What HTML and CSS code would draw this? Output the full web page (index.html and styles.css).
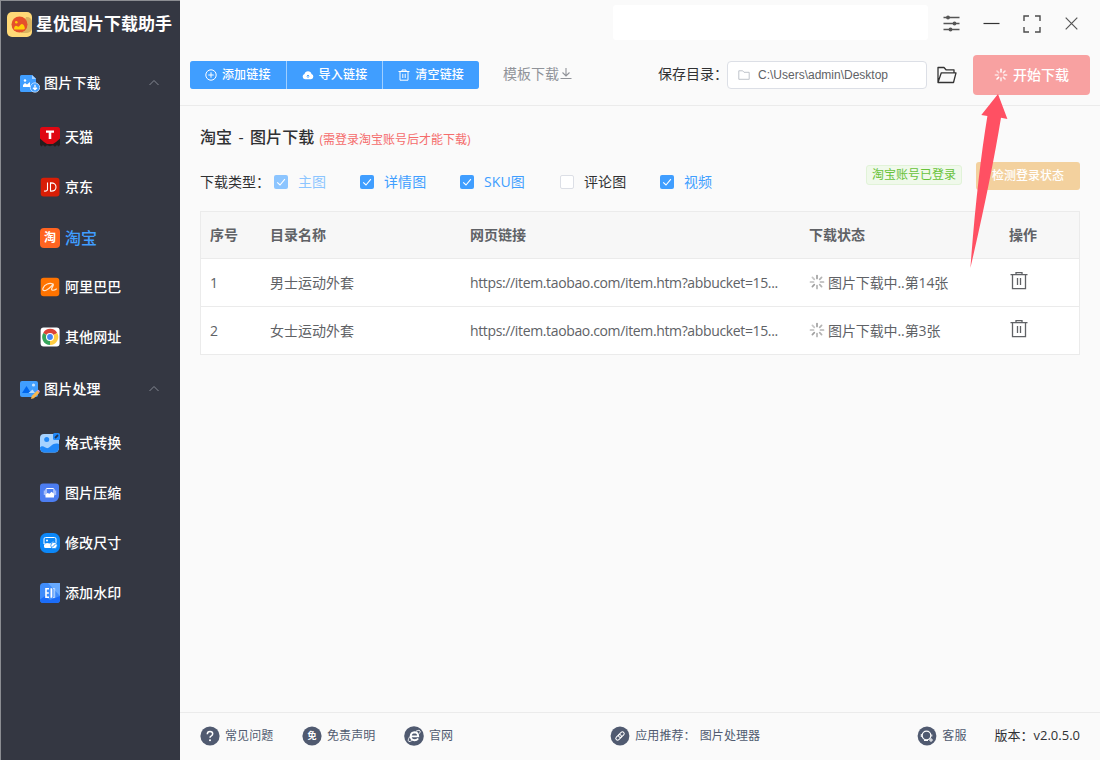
FILE: index.html
```html
<!DOCTYPE html>
<html lang="zh-CN">
<head>
<meta charset="utf-8">
<title>星优图片下载助手</title>
<link rel="stylesheet" href="styles.css">
</head>
<body>
<svg class="defs" width="0" height="0" aria-hidden="true">
  <symbol id="chevron" viewBox="0 0 12 12"><path d="M1.5 8 6 3.500 10.500 8" fill="none" stroke="currentColor"/></symbol>
  <symbol id="check" viewBox="0 0 14 14"><path d="M3.200 7.300 6 10 10.900 4.200" fill="none" stroke="#fff" stroke-width="1.100"/></symbol>
  <symbol id="spinner" viewBox="0 0 16 16"><g fill="none" stroke="currentColor" stroke-width="1.700" stroke-linecap="round"><path d="M8 1.500v3"/><path d="M12.600 3.400 10.700 5.300" opacity=".8"/><path d="M14.500 8h-3" opacity=".8"/><path d="M12.600 12.600l-1.900-1.900" opacity=".8"/><path d="M8 14.500v-3" opacity=".8"/><path d="M3.400 12.600l1.900-1.900"/><path d="M1.500 8h3" opacity=".7"/><path d="M3.400 3.400l1.900 1.900" opacity=".6"/></g></symbol>
  <symbol id="trash" viewBox="0 0 18 20"><path d="M.5 3.700h17M6 3.500V1.700h6v1.800M2.500 4v13.600h13V4M7.500 7v7M10.500 7v7" fill="none" stroke="currentColor" stroke-width="1.300"/></symbol>
</svg>
<div class="app">
  <aside class="sidebar">
    <div class="brand">
      <svg width="25" height="25" viewBox="0 0 25 25"><rect width="25" height="25" rx="5" fill="#ffd977"/><path d="M19 5h1a5 5 0 0 1 5 5v6a5 5 0 0 1-5 5h-6z" fill="#d9b35f"/><circle cx="12.500" cy="12.500" r="8" fill="#e5502b"/><path d="M7 17.200c.1-2 .8-3.500 2-3.500s1.400 1 2.400 1c1.300 0 1.900-2.600 3.500-2.600 1.800 0 2.800 2.600 3 4.600-.4.600-.9.700-1.400.7H8z" fill="#ffcf05"/><circle cx="9.300" cy="10.300" r="1.300" fill="#ffcf05"/></svg>
      <span>星优图片下载助手</span>
    </div>
    <div class="group">
      <svg width="20" height="18" viewBox="0 0 20 18"><path d="M1.500 0H12l4 3.500V17H1.500A1.500 1.500 0 0 1 0 15.500v-14A1.500 1.500 0 0 1 1.500 0z" fill="#409eff"/><path d="M12 0l4 4h-4z" fill="#a9d2ff"/><circle cx="5" cy="5.500" r="1.200" fill="#fff"/><path d="M3 12V10l2-2 2 1.500L10 7v5z" fill="#fff"/><circle cx="15" cy="12.500" r="4.700" fill="#409eff" stroke="#d7eaff" stroke-width=".8"/><path d="M15 9.800v4.500M13 12.700l2 2 2-2" fill="none" stroke="#fff" stroke-width="1.300"/></svg>
      <span>图片下载</span><svg class="caret" width="12" height="12"><use href="#chevron"/></svg>
    </div>
    <a class="item"><svg width="20" height="20" viewBox="0 0 20 20"><rect width="20" height="17" rx="2.500" fill="#df0712"/><path d="M0 11.500 4 15l3 2h6l3-2 4-3.500V18l-1.500 1.500L17 18l-2 1.800-2-1.500-3 1-3-1-2 1.500L3 18l-1.500 1.500L0 18z" fill="#241d1e"/><path d="M6 3.500h8v2.200h-2.700V12H8.700V5.700H6z" fill="#fff"/></svg><span>天猫</span></a>
    <a class="item"><svg width="20" height="20" viewBox="0 0 20 20"><rect x=".7" y=".7" width="18.800" height="18.800" rx="3" fill="#d81e06"/><path d="M7.500 5.500v6.700q0 2.300-3.500 1.800M10.500 5.900v8.200q5.500.4 5.500-4t-5.500-4.200z" fill="none" stroke="#fff" stroke-width="1.100"/></svg><span>京东</span></a>
    <a class="item active"><svg width="20" height="20" viewBox="0 0 20 20"><rect width="20" height="20" rx="4" fill="#ff6421"/><text class="logo-tao" x="10" y="14.300" text-anchor="middle">淘</text></svg><span>淘宝</span></a>
    <a class="item"><svg width="20" height="20" viewBox="0 0 20 20"><rect x=".7" y=".7" width="18.600" height="18.600" rx="3" fill="#ff7300"/><path d="M13.300 7.300C9.500 4.900 4.500 7.700 3 11.200c-.9 2.700 1.600 2.900 3.600 1.800 3-1.500 5.200-4.300 6.700-5.700.9.800-1.500 3-1.700 4.700-.2 2 2.700 1.400 5.200-.3" fill="none" stroke="#ffe5cc" stroke-width="1.200"/></svg><span>阿里巴巴</span></a>
    <a class="item"><svg width="20" height="20" viewBox="0 0 20 20"><rect x=".6" y=".6" width="19" height="19" rx="3" fill="#fff"/><path d="M10 10 3.200 6A8 8 0 0 1 17.200 6z" fill="#db4437"/><path d="M10 10 17.200 6A8 8 0 0 1 10 18z" fill="#ffcd40"/><path d="M10 10 10 18A8 8 0 0 1 3.200 6z" fill="#36a55b"/><circle cx="10" cy="10" r="4" fill="#fff"/><circle cx="10" cy="10" r="2.900" fill="#4285f4"/></svg><span>其他网址</span></a>
    <div class="group">
      <svg width="20" height="18" viewBox="0 0 20 18"><rect width="18" height="16" rx="2" fill="#409eff"/><path d="M2 12 6.500 5 11 12z" fill="#0067ee"/><path d="M8.500 12 12.500 8.500 15 12z" fill="#b8dcff"/><circle cx="13.500" cy="4" r="1.600" fill="#c7e3ff"/><path d="M11 18l.7-3 5.600-5.500 2.200 2.200-5.600 5.500z" fill="#f9b64d"/><path d="M17.300 9.500l1-.8 1.500 1.600-.6 1.200z" fill="#e8a7ef"/></svg>
      <span>图片处理</span><svg class="caret" width="12" height="12"><use href="#chevron"/></svg>
    </div>
    <a class="item"><svg width="20" height="20" viewBox="0 0 20 20"><path d="M4 1h11l4 4v10a4.500 4.500 0 0 1-4.500 4.500h-10A4.500 4.500 0 0 1 0 15V5a4 4 0 0 1 4-4z" fill="#a6d2ff"/><path d="M0 14.500c3-3.500 5.500 1.500 8 .5 3.500-1.500 5-6 11-4v4a4.500 4.500 0 0 1-4.500 4.500h-10A4.500 4.500 0 0 1 0 15z" fill="#2188f8"/><circle cx="6.700" cy="6.600" r="2.500" fill="#2188f8"/><rect x="13" y="0" width="7" height="7" rx="1.500" fill="#2188f8"/><path d="M15 5l3-3" stroke="#233554" stroke-width="1.800"/></svg><span>格式转换</span></a>
    <a class="item"><svg width="20" height="20" viewBox="0 0 20 20"><path d="M3 .5h13a3 3 0 0 1 3 3V13a6 6 0 0 1-6 6H3a3 3 0 0 1-3-3V3.500a3 3 0 0 1 3-3z" fill="#4c7df1"/><rect x="6" y="5.500" width="8" height="7.500" rx="1" fill="none" stroke="#fff" stroke-width="1"/><path d="M5.500 13V11.500l2-1.500 2 .8 2-2 2.500 2V14.500H5.500z" fill="#fff"/><path d="M4.300 7.500v4.500M15.700 7.500v4.500" fill="none" stroke="#d5e1ff" stroke-width=".8"/></svg><span>图片压缩</span></a>
    <a class="item"><svg width="20" height="20" viewBox="0 0 20 20"><rect width="20" height="20" rx="6.500" fill="#0c87f7"/><path d="M5.500 4.500h9q1.500 0 1.500 1.500v5H4V6q0-1.500 1.500-1.500z" fill="none" stroke="#fff" stroke-width="1"/><path d="M4 12l3-2 3 1 3-2.500 3 1.500v5H5.500Q4 15 4 13.500z" fill="#fff"/><circle cx="7" cy="7.500" r="1" fill="#fff"/><circle cx="14" cy="12.500" r="3.200" fill="#fff" stroke="#0c87f7" stroke-width=".8"/><path d="M12.500 14l3-3" stroke="#0c87f7" stroke-width=".9"/></svg><span>修改尺寸</span></a>
    <a class="item"><svg width="20" height="20" viewBox="0 0 20 20"><path d="M3.500 0H20v16.500a3.500 3.500 0 0 1-3.500 3.500h-13A3.500 3.500 0 0 1 0 16.500v-13A3.500 3.500 0 0 1 3.500 0z" fill="#3f8cfa"/><path d="M8 0h12v13z" fill="#68aaff"/><path d="M0 16.500 5 13l5 4 10-4v3.500a3.500 3.500 0 0 1-3.500 3.500h-13A3.500 3.500 0 0 1 0 16.500z" fill="#1b6cf8"/><path d="M9 5.800H6v8.400h3M6 10h2.800" fill="none" stroke="#fff" stroke-width="1.600"/><path d="M10.500 5.200h1.500v9.600h-1.500z" fill="#fff"/><path d="M13 5.500h1.700v9H13z" fill="none" stroke="#d7e8ff" stroke-width=".8"/></svg><span>添加水印</span></a>
  </aside>

  <main class="main">
    <header class="top">
      <div class="titlebar">
        <div class="blank"></div>
        <svg width="17" height="17" viewBox="0 0 17 17"><path d="M.5 2.500h16M.5 8.500h16M.5 14.500h16" stroke="#555" stroke-width="1.300"/><circle cx="5" cy="2.500" r="1.900" fill="#555"/><circle cx="11.500" cy="8.500" r="1.900" fill="#555"/><circle cx="7.500" cy="14.500" r="1.900" fill="#555"/></svg>
        <svg width="17" height="17" viewBox="0 0 17 17"><path d="M.5 8.500h16" stroke="#333" stroke-width="1.200"/></svg>
        <svg width="18" height="18" viewBox="0 0 18 18"><path d="M1 6V1h5M12 1h5v5M17 12v5h-5M6 17H1v-5" fill="none" stroke="#4c4c4c" stroke-width="1.400"/></svg>
        <svg class="close" width="13" height="13" viewBox="0 0 13 13"><path d="M.7.700 12.300 12.300M12.300.700.7 12.300" stroke="#555" stroke-width="1.200"/></svg>
      </div>
      <div class="toolbar">
        <div class="buttons">
          <button><svg width="12" height="12" viewBox="0 0 12 12"><circle cx="6" cy="6" r="5.200" fill="none" stroke="#fff"/><path d="M6 3.300v5.400M3.300 6h5.400" stroke="#fff"/></svg>添加链接</button>
          <button><svg width="12" height="12" viewBox="0 0 12 12"><path d="M3 10.300A2.800 2.800 0 0 1 2.500 4.900a3.600 3.600 0 0 1 7 0A2.800 2.800 0 0 1 9 10.300z" fill="#fff"/><path d="M6 9V6.200M4.700 7.300 6 6l1.300 1.300" fill="none" stroke="#409eff" stroke-width=".9"/></svg>导入链接</button>
          <button><svg width="12" height="12" viewBox="0 0 12 12"><path d="M.5 2.500h11M4 2.200V1h4v1.200M2 2.500v8.700h8V2.500M4.800 4.800V9M7.200 4.800V9" fill="none" stroke="#fff"/></svg>清空链接</button>
        </div>
        <div class="template">模板下载<svg width="14" height="14" viewBox="0 0 14 14"><path d="M7 1v8M3.500 5.500 7 9 10.500 5.500M1.500 11.500h11" fill="none" stroke="#909399" stroke-width="1.100"/></svg></div>
        <div class="save-label">保存目录：</div>
        <div class="path"><svg width="12" height="12" viewBox="0 0 12 12"><path d="M.8 1.800h3.900l1.300 1.500h5.200v7H.8z" fill="none" stroke="#b9bdc5" stroke-width=".9"/></svg>C:\Users\admin\Desktop</div>
        <svg class="open" width="20" height="18" viewBox="0 0 20 18"><path d="M1 16.500V1.500h6l2 2.300h8v3M1 16.500 4.300 6.800H19L16.500 16.500z" fill="none" stroke="#333" stroke-width="1.300" stroke-linejoin="round"/></svg>
        <button class="start"><svg width="14" height="14"><use href="#spinner"/></svg>开始下载</button>
      </div>
    </header>

    <section class="content">
      <h1>淘宝 - 图片下载<small>(需登录淘宝账号后才能下载)</small></h1>
      <div class="options">
        <span class="types">下载类型：</span>
        <label class="opt on dim"><i><svg width="14" height="14"><use href="#check"/></svg></i>主图</label>
        <label class="opt on"><i><svg width="14" height="14"><use href="#check"/></svg></i>详情图</label>
        <label class="opt on"><i><svg width="14" height="14"><use href="#check"/></svg></i>SKU图</label>
        <label class="opt"><i></i>评论图</label>
        <label class="opt on"><i><svg width="14" height="14"><use href="#check"/></svg></i>视频</label>
        <div class="login"><span class="tag">淘宝账号已登录</span><button class="detect">检测登录状态</button></div>
      </div>
      <div class="table">
        <div class="row head"><span>序号</span><span>目录名称</span><span>网页链接</span><span>下载状态</span><span>操作</span></div>
        <div class="row"><span>1</span><span>男士运动外套</span><span class="url">https://item.taobao.com/item.htm?abbucket=15...</span><span class="state"><svg width="16" height="16"><use href="#spinner"/></svg>图片下载中..第14张</span><span><svg class="del" width="18" height="20"><use href="#trash"/></svg></span></div>
        <div class="row"><span>2</span><span>女士运动外套</span><span class="url">https://item.taobao.com/item.htm?abbucket=15...</span><span class="state"><svg width="16" height="16"><use href="#spinner"/></svg>图片下载中..第3张</span><span><svg class="del" width="18" height="20"><use href="#trash"/></svg></span></div>
      </div>
    </section>

    <footer class="footer">
      <a class="f-faq"><svg width="20" height="20" viewBox="0 0 20 20"><circle cx="10" cy="10" r="9.600" fill="#505a70"/><path d="M7.300 8.200q0-2.700 2.700-2.700t2.700 2.300q0 1.300-1.300 2-1.400.7-1.400 2" fill="none" stroke="#fff" stroke-width="1.500"/><circle cx="10" cy="14.200" r="1" fill="#fff"/></svg>常见问题</a>
      <a class="f-free"><svg width="20" height="20" viewBox="0 0 20 20"><circle cx="10" cy="10" r="9.600" fill="#505a70"/><text class="mini" x="10" y="13.400" text-anchor="middle">免</text></svg>免责声明</a>
      <a class="f-site"><svg width="20" height="20" viewBox="0 0 20 20"><circle cx="10" cy="10" r="9.800" fill="#505a70"/><path d="M14.200 12.500Q12.800 14.300 10.500 14.300 6.700 14 6.700 10.200 7 6.500 10.500 6.300q3.500.1 3.700 4.100H7.500" fill="none" stroke="#fff" stroke-width="1.900"/><path d="M12 5.200q4-2 4.200 0 .1 1-1 2.500M5.800 10.500q-2.600 4.200-.9 5 1.200.3 3.400-1.200" fill="none" stroke="#fff" stroke-width=".9"/></svg>官网</a>
      <a class="f-app"><svg width="20" height="20" viewBox="0 0 20 20"><circle cx="10" cy="10" r="9.400" fill="#505a70"/><g transform="rotate(-45 10 10)" fill="none" stroke="#fff"><rect x="4.800" y="8.200" width="6.500" height="3.600" rx="1.800"/><rect x="8.700" y="8.200" width="6.500" height="3.600" rx="1.800"/></g></svg>应用推荐：<b>图片处理器</b></a>
      <a class="f-service"><svg width="20" height="20" viewBox="0 0 20 20"><circle cx="10" cy="10" r="9.400" fill="#505a70"/><circle cx="9.500" cy="9.500" r="4.300" fill="none" stroke="#fff" stroke-width="1.200"/><path d="M4.300 8v3M14.800 8.500v2M7 14.500h4M14 12v4M12 14h4" stroke="#fff" stroke-width="1"/></svg>客服</a>
      <span class="version">版本：<em>v2.0.5.0</em></span>
    </footer>
  </main>
  <svg class="arrow" width="38" height="175" viewBox="0 0 38 175"><path d="M28 0 37.400 25 31 23.700Q21 85 .4 174 7 85 17.400 22L11.300 21z" fill="#ff5063"/></svg>
</div>
</body>
</html>
```
FILE: styles.css
```css
* { box-sizing: border-box; }
body { margin: 0; font-family: "Open Sans", "Noto Sans CJK SC", sans-serif; font-size: 14px; line-height: 20px; color: #303133; background: #fafafa; white-space: nowrap; }
svg { display: block; flex: none; }
button { border: 0; margin: 0; padding: 0; font-family: inherit; color: #fff; display: flex; align-items: center; justify-content: center; line-height: 20px; }
.defs { position: absolute; }
.app { position: relative; display: flex; width: 1100px; height: 760px; overflow: hidden; }

.sidebar { width: 180px; flex: none; background: #343742; color: #fff; border-left: 1px solid #8b8d92; border-top: 1px solid #8b8d92; font-weight: 500; }
.brand { height: 55px; padding: 11px 0 0 6px; display: flex; gap: 4px; font-size: 17px; font-weight: 700; line-height: 24px; }
.group { height: 56px; display: flex; align-items: center; padding: 0 20px 0 19px; gap: 4px; }
.group span { margin-top: -2px; letter-spacing: .2px; }
.caret { margin: -2px 0 0 auto; color: #858993; }
.item { height: 50px; display: flex; align-items: center; gap: 5px; padding-left: 39px; letter-spacing: .1px; }
.item.active { color: #409eff; font-size: 16px; padding-top: 1px; }
.logo-tao { font-size: 12px; font-weight: 700; fill: #fff; }

.main { flex: 1; display: flex; flex-direction: column; min-width: 0; }
.top { height: 106px; border-bottom: 1px solid #ebebeb; }
.titlebar { height: 47px; display: flex; align-items: center; justify-content: flex-end; padding-right: 22px; gap: 23px; }
.titlebar .blank { width: 315px; height: 35px; background: #fff; border-radius: 3px; margin: -2px -8px 0 0; }
.close { margin-left: 1px; }
.toolbar { display: flex; align-items: center; height: 40px; margin-top: 8px; padding: 0 10px; }
.buttons { display: flex; gap: 1px; width: 289px; background: #a0cfff; border-radius: 3px; overflow: hidden; }
.buttons button { flex: 1; height: 28px; background: #409eff; font-size: 12px; font-weight: 500; gap: 5px; letter-spacing: .2px; }
.template { margin: -2px 0 0 24px; display: flex; align-items: center; color: #909399; }
.save-label { margin: -2px 0 0 85px; width: 69px; }
.path { width: 200px; height: 28px; border: 1px solid #dcdfe6; border-radius: 4px; background: #fff; display: flex; align-items: center; gap: 8px; padding-left: 10px; font-family: "Liberation Sans", sans-serif; font-size: 12px; color: #606266; }
.open { margin-left: 10px; }
.start { width: 117px; height: 40px; margin-left: 16px; border-radius: 4px; background: #f8a1a1; font-size: 14px; font-weight: 500; gap: 5px; }

.content { flex: 1; padding: 19px 20px 0; }
h1 { margin: 0; height: 24px; font-size: 16px; font-weight: 500; line-height: 24px; word-spacing: 2px; letter-spacing: .1px; display: flex; }
h1 small { margin: 1px 0 0 5px; font-size: 12px; font-weight: 400; letter-spacing: 0; color: #f56c6c; line-height: 27px; }
.options { display: flex; align-items: center; height: 28px; margin-top: 19px; }
.types { width: 74px; }
.opt { width: 100px; display: flex; align-items: center; gap: 10px; letter-spacing: .1px; }
.opt i { width: 14px; height: 14px; border: 1px solid #dcdfe6; border-radius: 2px; background: #fff; }
.opt.on { color: #409eff; }
.opt.on i { border: 0; background: #409eff; }
.opt.dim { width: 86px; color: #8cc5ff; }
.opt.dim i { background: #8cc5ff; }
.login { margin: -12px 0 0 auto; display: flex; align-items: center; gap: 14px; }
.tag { height: 20px; line-height: 18px; padding: 0 5px; border: 1px solid #e1f3d8; border-radius: 3px; background: #f0f9eb; color: #67c23a; font-size: 12px; margin-top: -2px; }
.detect { width: 104px; height: 28px; border-radius: 3px; background: #f3d19e; font-size: 12px; font-weight: 500; }

.table { margin-top: 15px; border: 1px solid #ebebeb; background: #fff; color: #606266; }
.row { display: grid; grid-template-columns: 60px 200px 339px 200px 79px; height: 48px; align-items: center; border-bottom: 1px solid #ebebeb; }
.row:last-child { height: 47px; border: 0; }
.row > span { padding-left: 9px; }
.row.head { height: 47px; background: #f7f7f7; font-weight: 700; }
.state { display: flex; align-items: center; gap: 3px; letter-spacing: -.1px; }
.state svg { color: #a0a0a0; margin-top: -2px; }
.del { margin: -3px 0 0 1px; }
.url { letter-spacing: -.36px; }

.footer { height: 48px; border-top: 1px solid #ebebeb; display: flex; align-items: center; padding: 0 20px 2px; font-size: 12px; color: #505a70; }
.footer a { display: flex; align-items: center; gap: 5px; letter-spacing: .1px; }
.footer svg { margin-top: 1px; }
.footer b { font-weight: 400; margin-left: -1px; }
.mini { font-size: 9px; font-weight: 700; fill: #fff; }
.f-faq, .f-free { width: 102px; }
.f-app { margin-left: 157px; }
.f-service { margin-left: auto; }
.version { margin: -2px 0 0 28px; color: #303133; font-size: 13px; }
.version em { font-style: normal; }
.arrow { position: absolute; left: 970px; top: 94px; }
```
